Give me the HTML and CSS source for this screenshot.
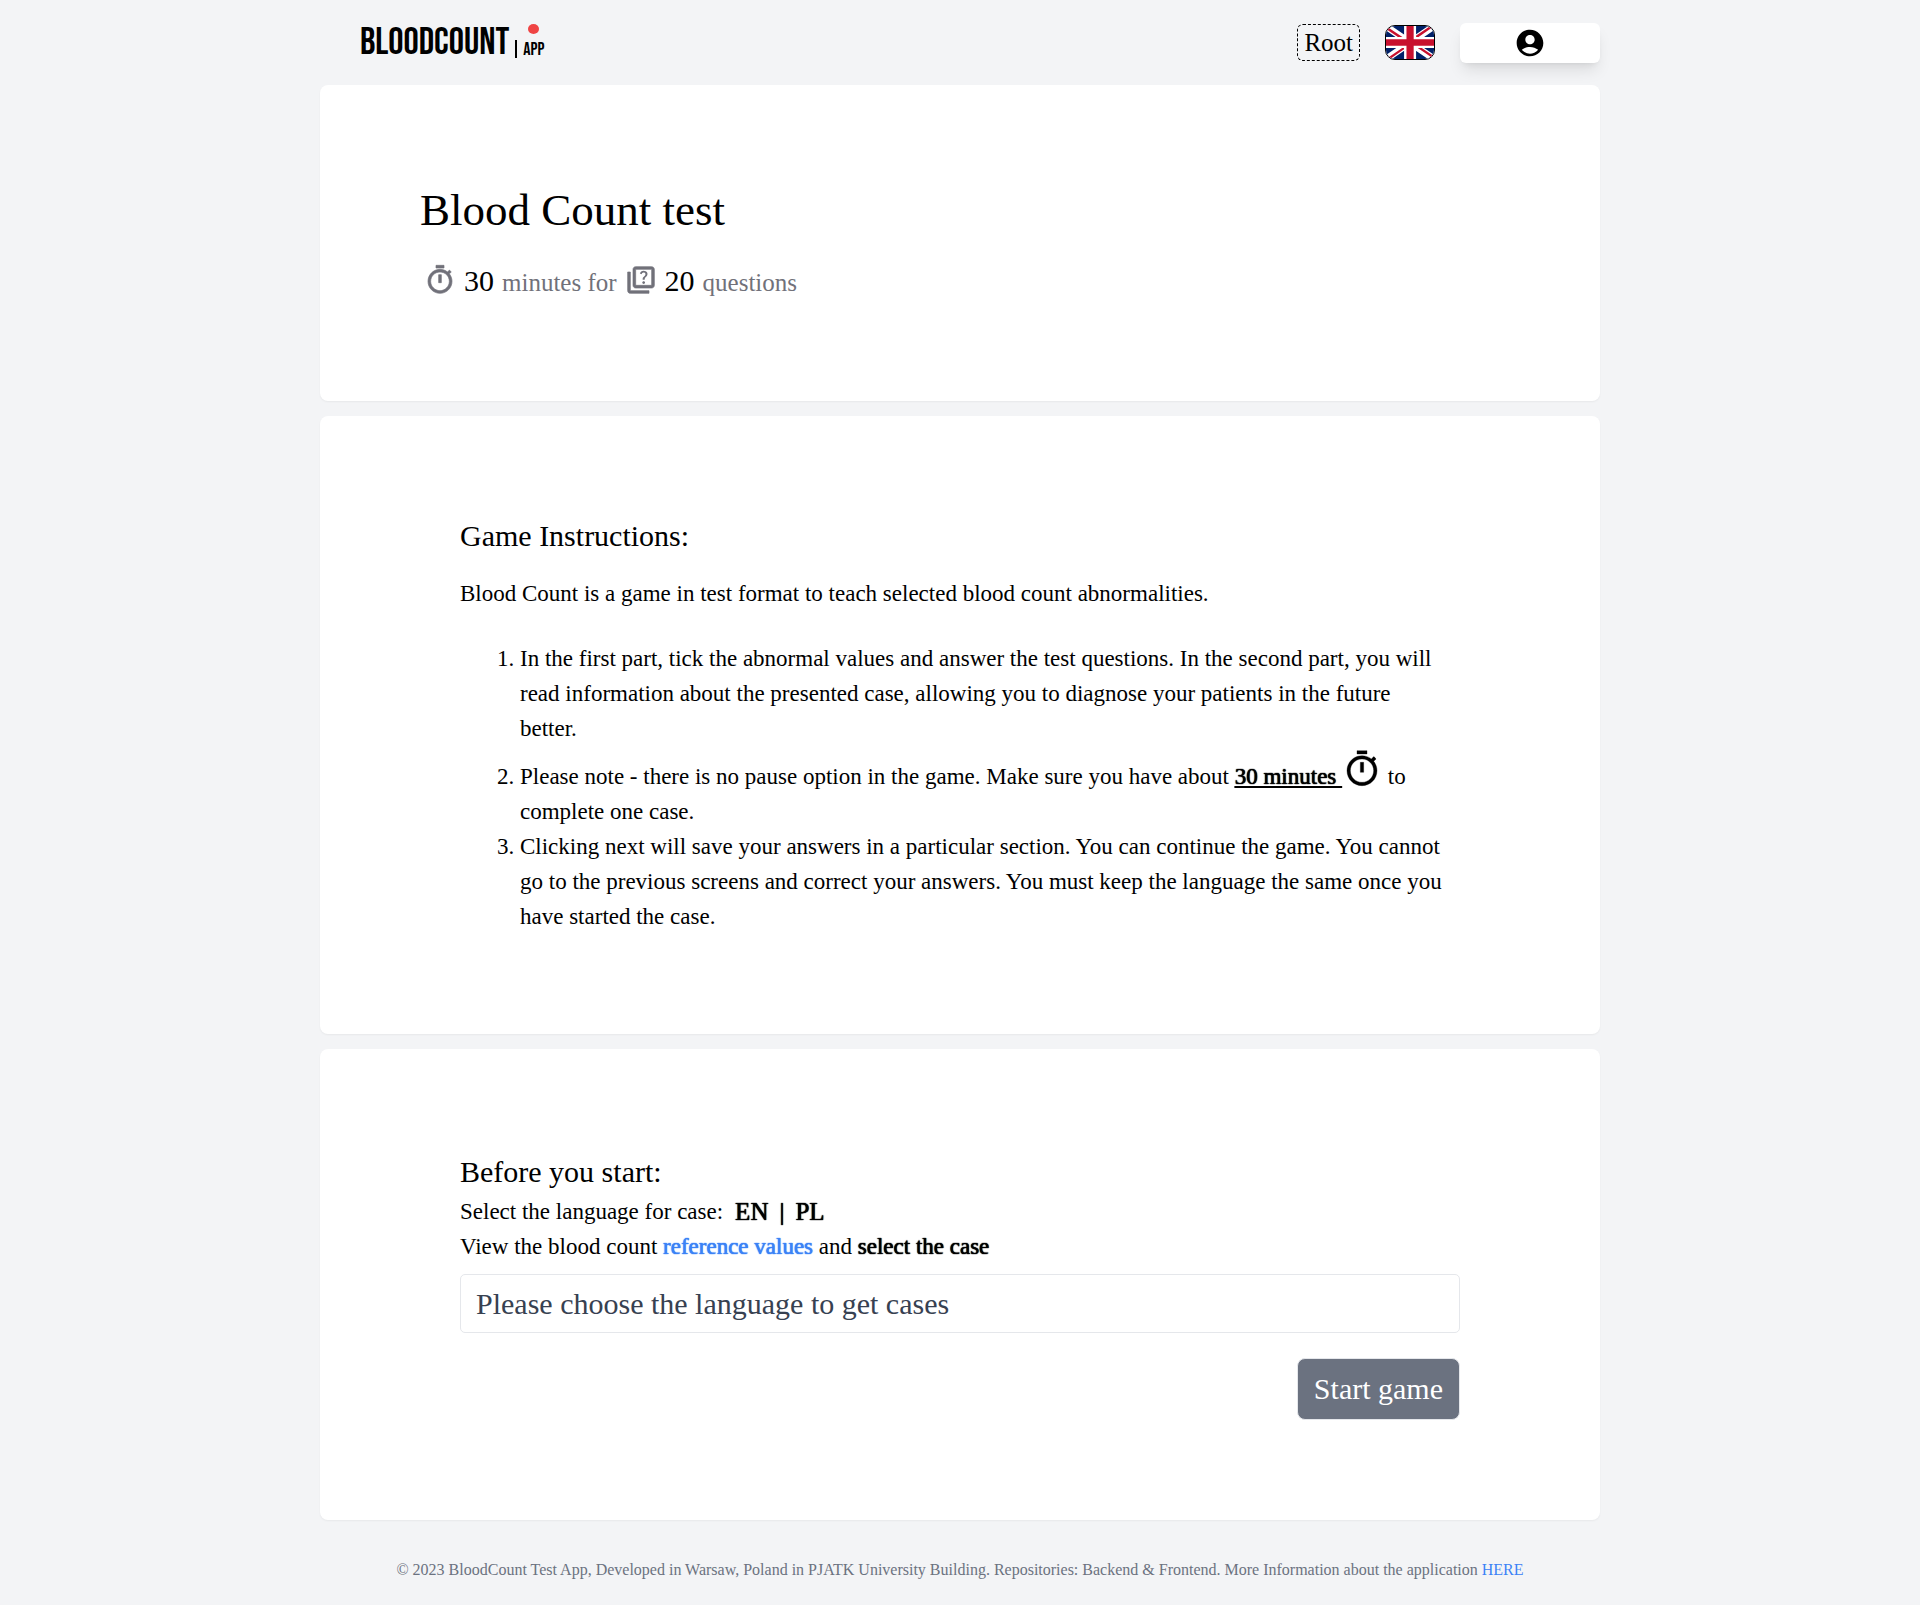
FILE: index.html
```html
<!DOCTYPE html>
<html lang="en">
<head>
  <meta charset="utf-8">
  <meta name="viewport" content="width=device-width, initial-scale=1">
  <title>BloodCount App</title>
  <link rel="stylesheet" href="styles.css">
</head>
<body>
  <div class="container">
    <header class="header">
      <a class="logo" href="#">
        <span class="logo-name">BLOODCOUNT</span>
        <span class="logo-bar"></span>
        <span class="logo-app"><span class="logo-dot"></span>APP</span>
      </a>
      <nav class="nav">
        <a class="role" href="#">Root</a>
        <button class="flag" type="button" aria-label="Change language">
          <svg viewBox="0 0 640 480" preserveAspectRatio="none" aria-hidden="true">
            <path fill="#012169" d="M0 0h640v480H0z"/>
            <path fill="#fff" d="m75 0 244 181L562 0h78v62L400 241l240 178v61h-80L320 301 81 480H0v-60l239-178L0 64V0z"/>
            <path fill="#c8102e" d="m424 281 216 159v40L369 281zm-184 20 6 35L54 480H0zM640 0v3L391 191l2-44L590 0zM0 0l239 176h-60L0 42z"/>
            <path fill="#fff" d="M241 0v480h160V0zM0 160v160h640V160z"/>
            <path fill="#c8102e" d="M0 193v96h640v-96zM273 0v480h96V0z"/>
          </svg>
        </button>
        <button class="account" type="button" aria-label="Account">
          <svg class="icon" viewBox="0 0 24 24" aria-hidden="true"><path d="M12 2C6.48 2 2 6.48 2 12s4.48 10 10 10 10-4.48 10-10S17.52 2 12 2zm0 4c1.93 0 3.5 1.57 3.5 3.5S13.93 13 12 13s-3.5-1.57-3.5-3.5S10.07 6 12 6zm0 14c-2.03 0-4.43-.82-6.14-2.88C7.55 15.8 9.68 15 12 15s4.45.8 6.14 2.12C16.43 19.18 14.03 20 12 20z"/></svg>
        </button>
      </nav>
    </header>

    <main class="cards">
      <section class="card card-intro">
        <h1 class="title">Blood Count test</h1>
        <p class="summary">
          <svg class="icon" viewBox="0 0 24 24" stroke-width=".5" aria-hidden="true"><path d="M15 1H9v2h6V1zm-4 13h2V8h-2v6zm8.03-6.61l1.42-1.42c-.43-.51-.9-.99-1.41-1.41l-1.42 1.42C16.07 4.74 14.12 4 12 4c-4.97 0-9 4.03-9 9s4.02 9 9 9 9-4.03 9-9c0-2.12-.74-4.07-1.97-5.61zM12 20c-3.87 0-7-3.13-7-7s3.13-7 7-7 7 3.13 7 7-3.13 7-7 7z"/></svg>
          <span class="figure">30</span>
          <span>minutes for</span>
          <svg class="icon" viewBox="0 0 24 24" stroke-width=".5" aria-hidden="true"><path d="M4 6H2v14c0 1.1.9 2 2 2h14v-2H4V6zM20 2H8c-1.1 0-2 .9-2 2v12c0 1.1.9 2 2 2h12c1.1 0 2-.9 2-2V4c0-1.1-.9-2-2-2zm0 14H8V4h12v12z"/><path stroke="none" d="M13.51 10.16c.41-.73 1.18-1.16 1.63-1.8.48-.68.21-1.94-1.14-1.94-.88 0-1.32.67-1.5 1.23l-1.37-.57C11.51 5.96 12.52 5 13.99 5c1.23 0 2.08.56 2.51 1.26.37.6.58 1.73.01 2.57-.63.93-1.23 1.21-1.56 1.81-.13.24-.18.4-.18 1.18h-1.52c.01-.41-.06-1.08.26-1.66zm-.56 3.79c0-.59.47-1.04 1.05-1.04.59 0 1.04.45 1.04 1.04 0 .58-.44 1.05-1.04 1.05-.58 0-1.05-.47-1.05-1.05z"/></svg>
          <span class="figure">20</span>
          <span>questions</span>
        </p>
      </section>

      <section class="card">
        <h2 class="subtitle">Game Instructions:</h2>
        <p class="lead">Blood Count is a game in test format to teach selected blood count abnormalities.</p>
        <ol class="rules">
          <li>In the first part, tick the abnormal values and answer the test questions. In the second part, you will read information about the presented case, allowing you to diagnose your patients in the future better.</li>
          <li>Please note - there is no pause option in the game. Make sure you have about <span class="strong duration">30 minutes </span><svg class="timer" viewBox="0 0 24 24" stroke-width=".2" aria-hidden="true"><path d="M15 1H9v2h6V1zm-4 13h2V8h-2v6zm8.03-6.61l1.42-1.42c-.43-.51-.9-.99-1.41-1.41l-1.42 1.42C16.07 4.74 14.12 4 12 4c-4.97 0-9 4.03-9 9s4.02 9 9 9 9-4.03 9-9c0-2.12-.74-4.07-1.97-5.61zM12 20c-3.87 0-7-3.13-7-7s3.13-7 7-7 7 3.13 7 7-3.13 7-7 7z"/></svg> to complete one case.</li>
          <li>Clicking next will save your answers in a particular section. You can continue the game. You cannot go to the previous screens and correct your answers. You must keep the language the same once you have started the case.</li>
        </ol>
      </section>

      <section class="card card-start">
        <h2 class="subtitle">Before you start:</h2>
        <div class="languages">Select the language for case: <span class="choices strong"><button type="button">EN</button><span>|</span><button type="button">PL</button></span></div>
        <p>View the blood count <a class="link strong" href="#">reference values</a> and <label class="strong" for="case">select the case</label></p>
        <select class="case" id="case">
          <option>Please choose the language to get cases</option>
        </select>
        <button class="start" type="button">Start game</button>
      </section>
    </main>

    <footer class="footer">© 2023 BloodCount Test App, Developed in Warsaw, Poland in PJATK University Building. Repositories: Backend &amp; Frontend. More Information about the application <a class="link" href="#">HERE</a></footer>
  </div>
</body>
</html>
```
FILE: styles.css
```css
* {
  box-sizing: border-box;
  margin: 0;
  padding: 0;
}

body {
  background: #f3f4f6;
  color: #000;
  font-family: "Liberation Serif", serif;
  font-size: 23px;
  line-height: 35px;
}

button,
select {
  border: 0;
  background: none;
  color: inherit;
  font: inherit;
  text-shadow: inherit;
  cursor: pointer;
}

a {
  color: inherit;
  text-decoration: none;
}

.container {
  width: 100%;
  max-width: 1280px;
  margin: 0 auto;
}

.header {
  display: flex;
  align-items: center;
  justify-content: space-between;
  height: 85px;
  padding-left: 40px;
}

.logo {
  display: flex;
  align-items: flex-end;
  gap: 6px;
  font-family: "Bebas Neue", "Liberation Sans Narrow", "Liberation Sans", sans-serif;
}

.logo-name {
  font-size: 38px;
  line-height: 40px;
}

.logo-bar {
  width: 2px;
  height: 18px;
  margin-bottom: 5px;
  background: #000;
}

.logo-app {
  display: flex;
  flex-direction: column;
  align-items: center;
  gap: 3px;
  font-size: 18px;
  line-height: 26px;
}

.logo-dot {
  width: 11px;
  height: 10px;
  border-radius: 50%;
  background: #ef4444;
}

.nav {
  display: flex;
  align-items: center;
  gap: 25px;
}

.role {
  padding: 0 6px;
  border: 1px dashed #000;
  border-radius: 6px;
  font-size: 25px;
}

.flag {
  width: 50px;
  height: 35px;
  overflow: hidden;
  border: 1px solid #000;
  border-radius: 10px;
}

.flag svg {
  display: block;
  width: 100%;
  height: 100%;
}

.icon {
  width: 32px;
  height: 32px;
  fill: currentColor;
}

.account {
  display: flex;
  align-items: center;
  justify-content: center;
  width: 140px;
  height: 40px;
  border-radius: 6px;
  background: #fff;
  box-shadow: 0 10px 15px -3px rgba(0, 0, 0, 0.1), 0 4px 6px -4px rgba(0, 0, 0, 0.1);
}

.cards {
  display: flex;
  flex-direction: column;
  gap: 15px;
}

.card {
  padding: 100px 140px;
  border-radius: 8px;
  background: #fff;
  box-shadow: 0 1px 2px rgba(0, 0, 0, 0.05);
}

.card-intro {
  padding: 100px 100px 98px;
}

.title {
  font-size: 45px;
  font-weight: 400;
  line-height: 50px;
}

.summary {
  display: flex;
  align-items: baseline;
  gap: 8px;
  margin-top: 26px;
  padding-left: 4px;
  color: #71717a;
  font-size: 25px;
  line-height: 40px;
}

.summary .icon {
  align-self: flex-start;
  margin-top: 3px;
  stroke: currentColor;
}

.figure {
  color: #000;
  font-size: 30px;
}

.subtitle {
  font-size: 30px;
  font-weight: 400;
  line-height: 40px;
}

.lead {
  margin: 20px 0 30px;
}

.rules {
  padding: 0 12px 0 60px;
}

.strong {
  text-shadow: 0 0 1px currentColor, 0 0 1px currentColor;
}

.duration {
  text-decoration: underline 2px;
  text-underline-offset: 2px;
}

.timer {
  width: 40px;
  height: 40px;
  margin-top: 3px;
  stroke: currentColor;
  vertical-align: -5px;
}

.card-start {
  padding-top: 103px;
}

.languages {
  display: flex;
  gap: 12px;
  margin-top: 2px;
}

.choices {
  display: flex;
  gap: 11px;
  font-size: 25px;
}

.link {
  color: #3b82f6;
}

.case {
  display: block;
  width: 100%;
  height: 59px;
  margin-top: 10px;
  padding: 0 15px;
  appearance: none;
  border: 1px solid #e5e7eb;
  border-radius: 5px;
  background: #fff;
  color: #374151;
  font-size: 30px;
}

.start {
  display: block;
  margin: 25px 0 0 auto;
  padding: 12px 16px;
  border: 1px solid #e5e7eb;
  border-radius: 8px;
  background: #6b7280;
  color: #fff;
  font-size: 30px;
  line-height: 36px;
}

.footer {
  padding: 32px 0;
  color: #6b7280;
  font-size: 16px;
  text-align: center;
}
```
